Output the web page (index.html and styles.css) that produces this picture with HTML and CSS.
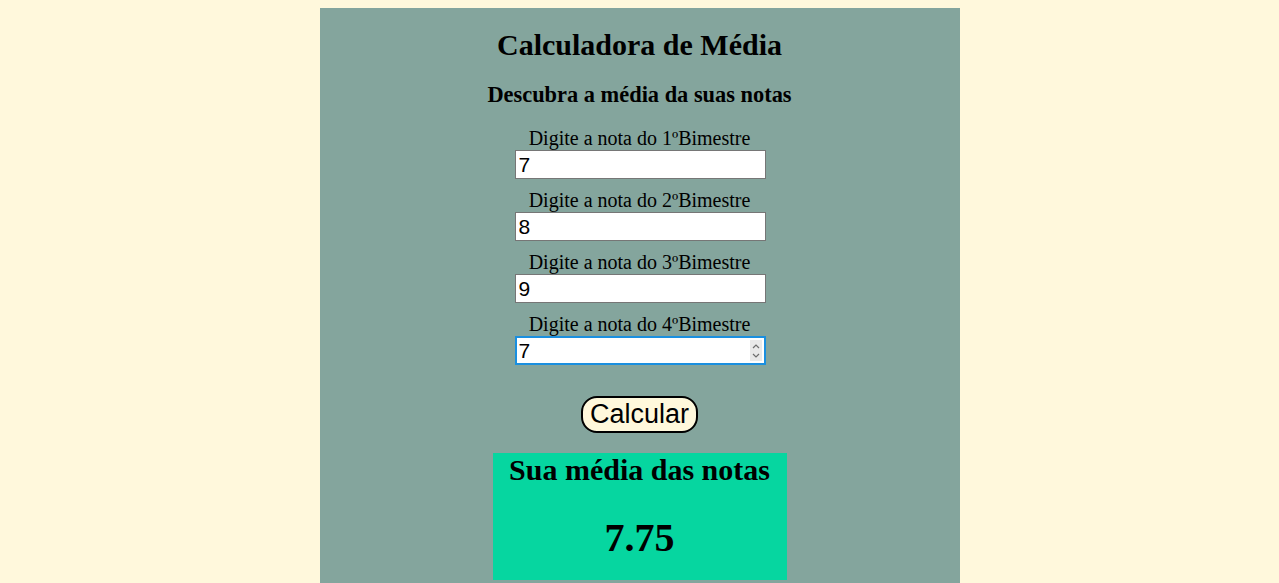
FILE: index.html
```html
<!DOCTYPE html>
<html lang="pt-BR">
<head>
<meta charset="utf-8">
<title>Calculadora de Média</title>
<link rel="stylesheet" href="styles.css">
</head>
<body>
<main class="card">
  <h1 class="title">Calculadora de Média</h1>
  <h2 class="subtitle">Descubra a média da suas notas</h2>
  <form class="form">
    <div class="field">
      <label class="label" for="n1">Digite a nota do 1ºBimestre</label>
      <input class="input" id="n1" type="text" value="7">
    </div>
    <div class="field">
      <label class="label" for="n2">Digite a nota do 2ºBimestre</label>
      <input class="input" id="n2" type="text" value="8">
    </div>
    <div class="field">
      <label class="label" for="n3">Digite a nota do 3ºBimestre</label>
      <input class="input" id="n3" type="text" value="9">
    </div>
    <div class="field">
      <label class="label" for="n4">Digite a nota do 4ºBimestre</label>
      <div class="input-wrap">
        <input class="input input-focused" id="n4" type="text" value="7">
        <span class="spinner">
          <svg width="10" height="20" viewBox="0 0 10 20"><path d="M2 7 L5 4 L8 7" fill="none" stroke="#6e6e6e" stroke-width="1.2"/><path d="M2 13 L5 16 L8 13" fill="none" stroke="#6e6e6e" stroke-width="1.2"/></svg>
        </span>
      </div>
    </div>
    <button class="button" type="button">Calcular</button>
  </form>
  <section class="result">
    <h2 class="result-title">Sua média das notas</h2>
    <p class="result-value">7.75</p>
  </section>
</main>
</body>
</html>
```
FILE: styles.css
```css
html, body {
  background: #fff8dc;
}
body {
  margin: 8px;
  font-family: "Liberation Serif", "Times New Roman", serif;
  color: #000;
}
.card {
  width: 640px;
  min-height: 620px;
  margin: 0 auto;
  background: #84a59d;
  padding-top: 20px;
  text-align: center;
  display: flex;
  flex-direction: column;
  align-items: center;
}
.title {
  margin: 0;
  font-size: 30px;
  font-weight: bold;
  line-height: normal;
}
.subtitle {
  margin: 20px 0 0;
  font-size: 22.4px;
  font-weight: bold;
  line-height: normal;
}
.form {
  display: flex;
  flex-direction: column;
  align-items: center;
  margin-top: 19px;
}
.field {
  display: flex;
  flex-direction: column;
  align-items: center;
  margin-bottom: 10px;
}
.label {
  font-size: 20px;
  line-height: 23px;
  margin-bottom: 0;
}
.input-wrap {
  position: relative;
  margin-left: 1px;
}
.input {
  box-sizing: border-box;
  width: 251px;
  height: 29px;
  border: 1px solid #767676;
  padding: 1px 3px;
  font-family: "Liberation Sans", Arial, sans-serif;
  font-size: 21px;
  background: #fff;
  color: #000;
  display: block;
}
.field > .input {
  margin-left: 1px;
}
.input-focused {
  border-color: #1a8fdf;
  box-shadow: inset 0 0 0 1px #1a8fdf;
  outline: none;
}
.spinner {
  position: absolute;
  right: 4px;
  top: 4px;
  width: 12px;
  height: 21px;
  background: #e9e9e9;
  display: flex;
  align-items: center;
  justify-content: center;
}
.button {
  margin-top: 21px;
  box-sizing: border-box;
  height: 37px;
  padding: 0 7px;
  border: 2px solid #000;
  border-radius: 16px;
  background: #fff8dc;
  font-family: "Liberation Sans", Arial, sans-serif;
  font-size: 27px;
  line-height: 31px;
  color: #000;
}
.result {
  margin-top: 20px;
  width: 294px;
  height: 127px;
  background: #06d6a0;
}
.result-title {
  margin: 0;
  font-size: 30px;
  font-weight: bold;
  line-height: normal;
}
.result-value {
  margin: 27px 0 0;
  font-size: 40px;
  font-weight: bold;
  line-height: normal;
}
```
